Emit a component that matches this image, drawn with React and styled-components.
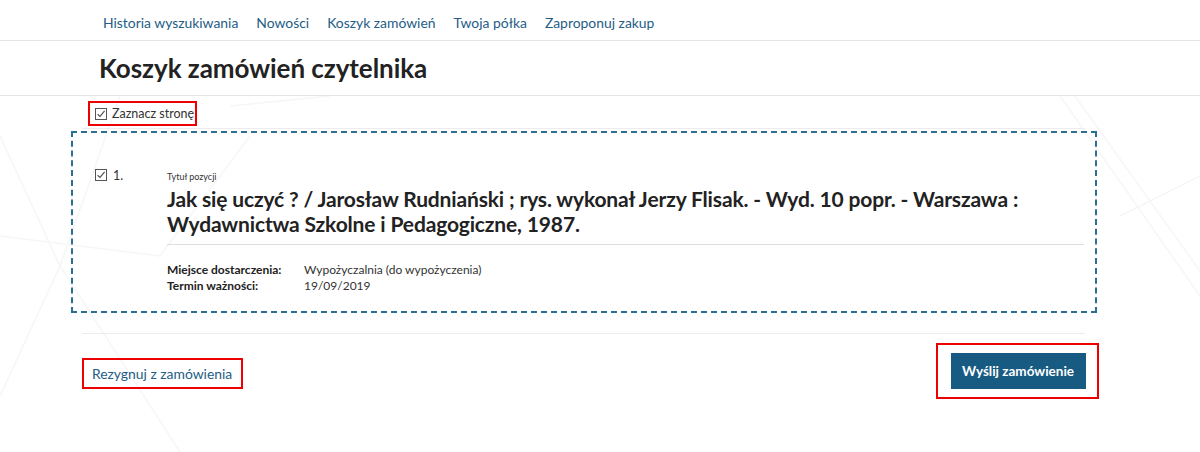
import React from "react";
import styled, { createGlobalStyle } from "styled-components";

const Global = createGlobalStyle`
  html, body { margin: 0; padding: 0; background: #fff; }
  body { font-family: Lato, "Open Sans", sans-serif; color: #222; }
  * { box-sizing: border-box; }
`;

const Page = styled.div`
  position: relative;
  width: 1200px;
  height: 452px;
  overflow: hidden;
`;

const Decor = styled.svg`
  position: absolute;
  left: 0;
  top: 96px;
  width: 1200px;
  height: 356px;
  pointer-events: none;
`;

const TopNav = styled.nav`
  position: relative;
  height: 41px;
  border-bottom: 1px solid #e4e4e4;
  display: flex;
  align-items: center;
  gap: 18px;
  padding: 4px 0 0 103px;
  background: #fff;
`;

const NavLink = styled.a`
  font-size: 13.9px;
  color: #245d85;
  text-decoration: none;
`;

const TitleBar = styled.header`
  position: relative;
  height: 55px;
  border-bottom: 1px solid #e4e4e4;
  padding: 11px 0 0 99px;
  background: #fff;
`;

const Title = styled.h1`
  margin: 0;
  font-size: 26px;
  font-weight: 700;
  color: #222;
  letter-spacing: -0.05px;
`;

const Main = styled.main`
  position: relative;
  width: 1003px;
  margin-left: 82px;
`;

const Highlight = styled.div`
  display: inline-flex;
  align-items: center;
  border: 2px solid #ee0000;
`;

const SelectAll = styled(Highlight)`
  margin: 5px 0 0 6px;
  height: 25px;
  padding: 0 0 0 5px;
  gap: 5px;
  font-size: 12.5px;
  color: #333;
  width: 109px;
`;

const ListTop = styled.div`
  margin-top: 2px;
  border-top: 1px solid #ececec;
`;

const ItemBox = styled.div`
  margin: 2px -12px 0 -11px;
  height: 182px;
  border: 2px dashed #2b6f93;
  display: grid;
  grid-template-columns: 18px 54px 1fr;
  padding: 36px 11px 0 22px;
`;

const Num = styled.span`
  font-size: 12.5px;
  line-height: 14px;
  color: #333;
`;

const Content = styled.div`
  display: flex;
  flex-direction: column;
`;

const Caption = styled.span`
  font-size: 9px;
  color: #333;
  margin-top: 2px;
`;

const BookTitle = styled.h2`
  margin: 4px 0 0;
  font-size: 21px;
  line-height: 25px;
  font-weight: 700;
  color: #222;
  padding-bottom: 8px;
  border-bottom: 1px solid #dedede;
  letter-spacing: -0.15px;
`;

const Details = styled.dl`
  display: grid;
  grid-template-columns: 137px 1fr;
  margin: 17px 0 0;
  font-size: 12px;
  line-height: 16px;
  color: #333;
  dt { font-weight: 700; color: #222; }
  dd { margin: 0; }
`;

const Separator = styled.hr`
  margin: 20px 0 0;
  border: 0;
  border-top: 1px solid #ececec;
`;

const Footer = styled.div`
  display: flex;
  justify-content: space-between;
  align-items: flex-start;
  margin-top: 9px;
`;

const CancelBox = styled(Highlight)`
  margin-top: 15px;
  height: 31px;
  width: 161px;
  padding-left: 8px;
`;

const CancelLink = styled.a`
  font-size: 13.9px;
  color: #245d85;
  text-decoration: none;
`;

const SendBox = styled(Highlight)`
  margin-right: -14px;
  width: 163px;
  height: 56px;
  justify-content: center;
  padding-left: 1px;
`;

const SendButton = styled.button`
  width: 135px;
  height: 36px;
  border: 0;
  background: #175b83;
  color: #fff;
  font-family: Lato, sans-serif;
  font-weight: 700;
  font-size: 13.5px;
  cursor: pointer;
`;

const CheckIcon = () => (
  <svg width="12" height="12" viewBox="0 0 12 12">
    <rect x="0.5" y="0.5" width="11" height="11" fill="#fff" stroke="#555" />
    <path d="M2.6 6.2 L5 8.4 L9.6 2.8" fill="none" stroke="#555" strokeWidth="1.2" />
  </svg>
);

export default function App() {
  return (
    <Page>
      <Global />
      <Decor viewBox="0 0 1200 356">
        <g stroke="#f6f6f6" strokeWidth="1.5" fill="none">
          <path d="M0 40 L60 170 L0 300" />
          <path d="M120 0 L60 170 L180 356" />
          <path d="M0 140 L160 160 L250 40" />
          <path d="M1060 0 L1200 200" />
          <path d="M1075 0 L1200 175" />
          <path d="M1120 120 L1200 80" />
          <path d="M230 10 L330 0" />
        </g>
      </Decor>
      <TopNav>
        <NavLink href="#">Historia wyszukiwania</NavLink>
        <NavLink href="#">Nowości</NavLink>
        <NavLink href="#">Koszyk zamówień</NavLink>
        <NavLink href="#">Twoja półka</NavLink>
        <NavLink href="#">Zaproponuj zakup</NavLink>
      </TopNav>
      <TitleBar>
        <Title>Koszyk zamówień czytelnika</Title>
      </TitleBar>
      <Main>
        <SelectAll>
          <CheckIcon />
          <span>Zaznacz stronę</span>
        </SelectAll>
        <ListTop />
        <ItemBox>
          <CheckIcon />
          <Num>1.</Num>
          <Content>
            <Caption>Tytuł pozycji</Caption>
            <BookTitle>
              Jak się uczyć ? / Jarosław Rudniański ; rys. wykonał Jerzy Flisak. - Wyd. 10 popr. - Warszawa : Wydawnictwa Szkolne i Pedagogiczne, 1987.
            </BookTitle>
            <Details>
              <dt>Miejsce dostarczenia:</dt>
              <dd>Wypożyczalnia (do wypożyczenia)</dd>
              <dt>Termin ważności:</dt>
              <dd>19/09/2019</dd>
            </Details>
          </Content>
        </ItemBox>
        <Separator />
        <Footer>
          <CancelBox>
            <CancelLink href="#">Rezygnuj z zamówienia</CancelLink>
          </CancelBox>
          <SendBox>
            <SendButton>Wyślij zamówienie</SendButton>
          </SendBox>
        </Footer>
      </Main>
    </Page>
  );
}
